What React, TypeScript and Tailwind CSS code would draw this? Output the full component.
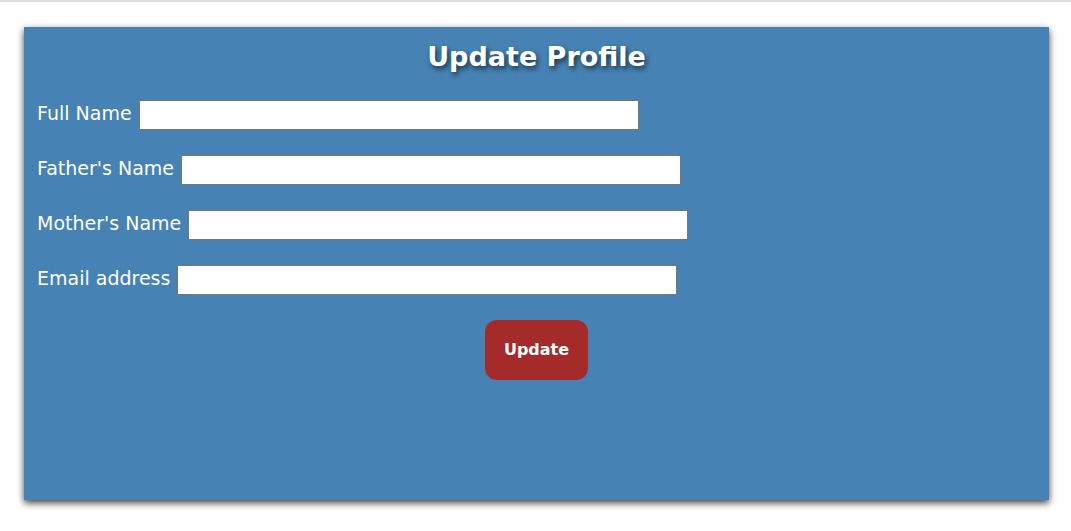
import React from "react";

type Field = { label: string; type: string };

const fields: Field[] = [
  { label: "Full Name", type: "text" },
  { label: "Father's Name", type: "text" },
  { label: "Mother's Name", type: "text" },
  { label: "Email address", type: "email" },
];

function UpdateProfile() {
  return (
    <div className="min-h-[531px] bg-white border-t-2 border-[#dddddd] pt-[25px] font-['DejaVu_Sans',sans-serif]">
      {/* panel */}
      <div className="ml-[24px] mr-[22px] h-[473px] bg-[#4682b4] shadow-[0_3px_7px_rgba(0,0,0,0.75)] text-white">
        {/* title */}
        <h1 className="pt-[12px] text-center text-[27px] font-bold leading-[36px] [text-shadow:2px_3px_5px_rgba(0,0,0,0.6)]">
          Update Profile
        </h1>

        {/* fields */}
        <form className="flex flex-col gap-[24px] mt-[24px]">
          {fields.map((f) => (
            <div key={f.label} className="flex items-center gap-[7px] h-[31px] pl-[13px]">
              <label className="text-[19px] leading-[26px] pb-[4px] whitespace-nowrap">{f.label}</label>
              <input
                type={f.type}
                className="w-[500px] h-[30px] bg-white border border-[#767676] text-black outline-none"
              />
            </div>
          ))}

          {/* button */}
          <div className="flex justify-center pt-[1px]">
            <button
              type="button"
              className="w-[103px] h-[60px] rounded-[12px] bg-[#a52a2a] text-white text-[16px] font-bold"
            >
              Update
            </button>
          </div>
        </form>
      </div>
    </div>
  );
}

export default function App() {
  return <UpdateProfile />;
}
